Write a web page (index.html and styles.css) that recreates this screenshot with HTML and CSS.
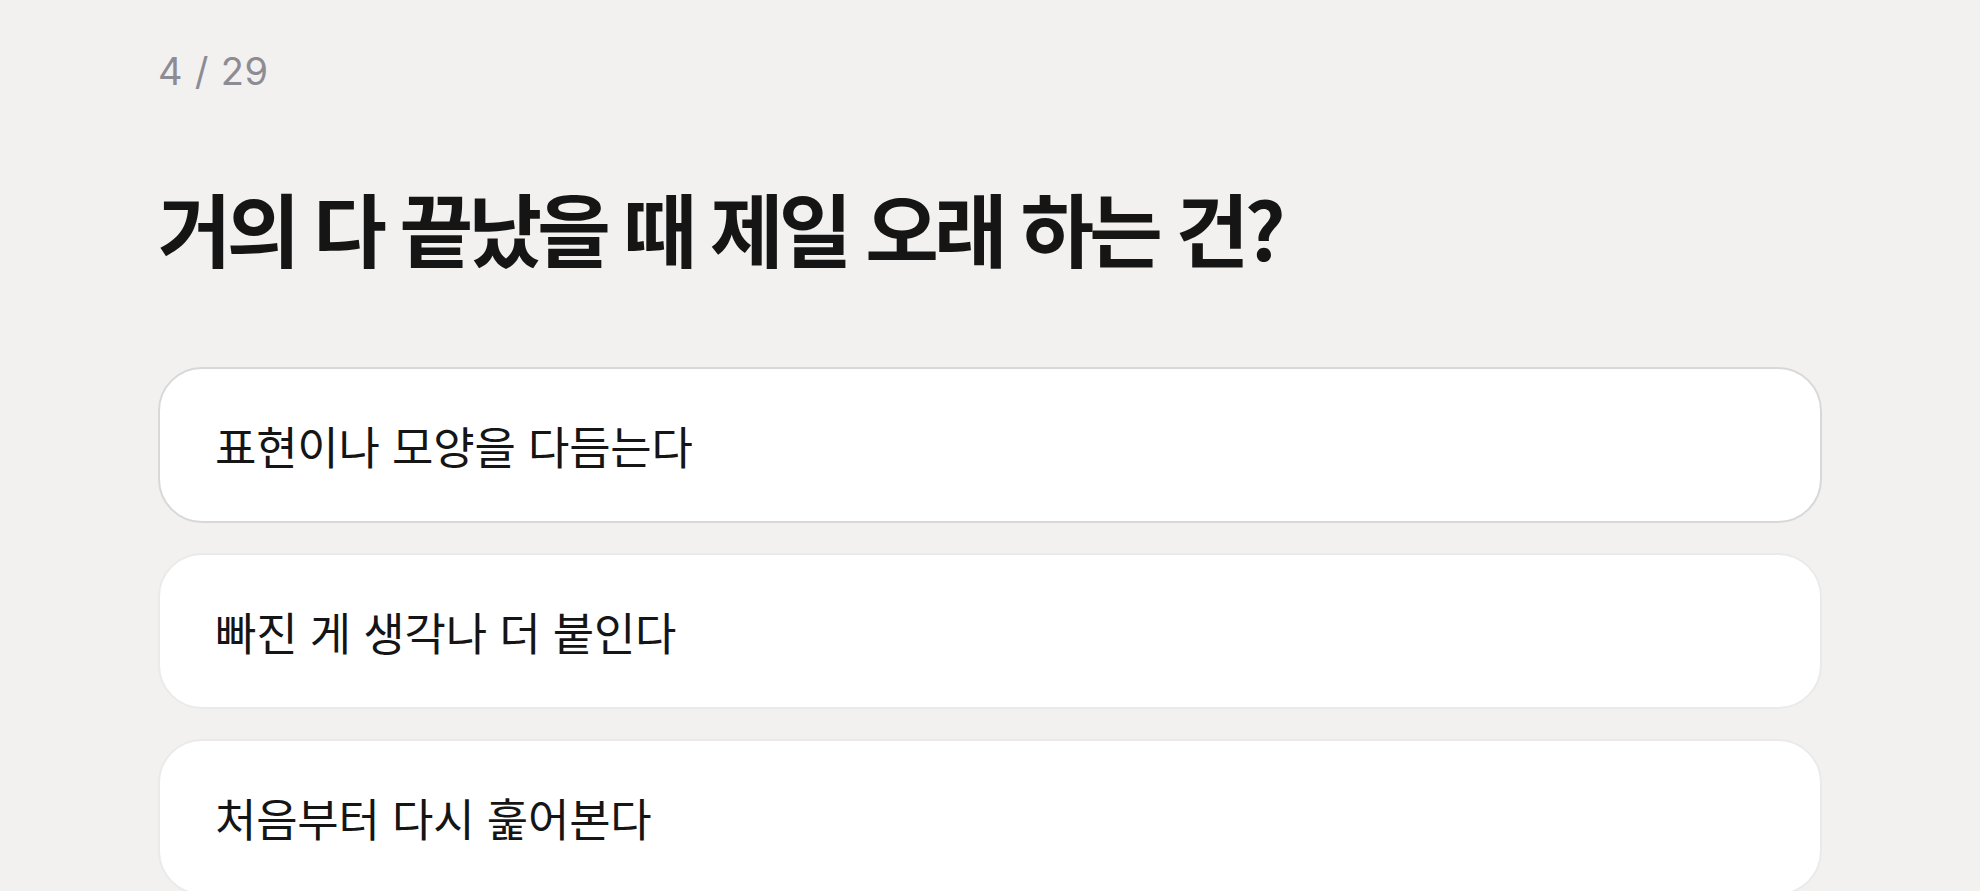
FILE: index.html
```html
<!DOCTYPE html>
<html lang="ko">
<head>
  <meta charset="UTF-8">
  <meta name="viewport" content="width=device-width, initial-scale=1.0">
  <title>Quiz</title>
  <link rel="stylesheet" href="styles.css">
</head>
<body>
  <div class="quiz">
    <div class="quiz-count">4 / 29</div>
    <h1 class="quiz-title">거의 다 끝났을 때 제일 오래 하는 건?</h1>
    <ul class="quiz-options">
      <li class="quiz-option is-hover">표현이나 모양을 다듬는다</li>
      <li class="quiz-option">빠진 게 생각나 더 붙인다</li>
      <li class="quiz-option">처음부터 다시 훑어본다</li>
    </ul>
  </div>
</body>
</html>
```

FILE: styles.css
```css
body,ul,li,h1{
  margin: 0;
  padding: 0;
  box-sizing: border-box;
}
ul,li{
  list-style: none;
}
body{
  background: #f2f1f0;
  font-family: "Noto Sans CJK KR", "Noto Sans", sans-serif;
  color: #151515;
  overflow: hidden;
}
.quiz{
  padding: 48px 158px 0;
}
.quiz-count{
  font-family: Inter, "Noto Sans", sans-serif;
  font-size: 38px;
  line-height: 46px;
  color: #8d8c94;
  letter-spacing: 0.02em;
}
.quiz-title{
  margin-top: 82px;
  font-size: 80px;
  line-height: 100px;
  font-weight: 700;
  letter-spacing: -0.06em;
}
.quiz-options{
  margin-top: 91px;
  display: flex;
  flex-direction: column;
  gap: 30px;
}
.quiz-option{
  height: 156px;
  display: flex;
  align-items: center;
  padding: 0 55px;
  background: #fff;
  border: 2px solid #ebeaea;
  border-radius: 44px;
  font-size: 45px;
  font-weight: 400;
  letter-spacing: -0.005em;
}
.quiz-option.is-hover{
  border-color: #d8d8d8;
}
```
